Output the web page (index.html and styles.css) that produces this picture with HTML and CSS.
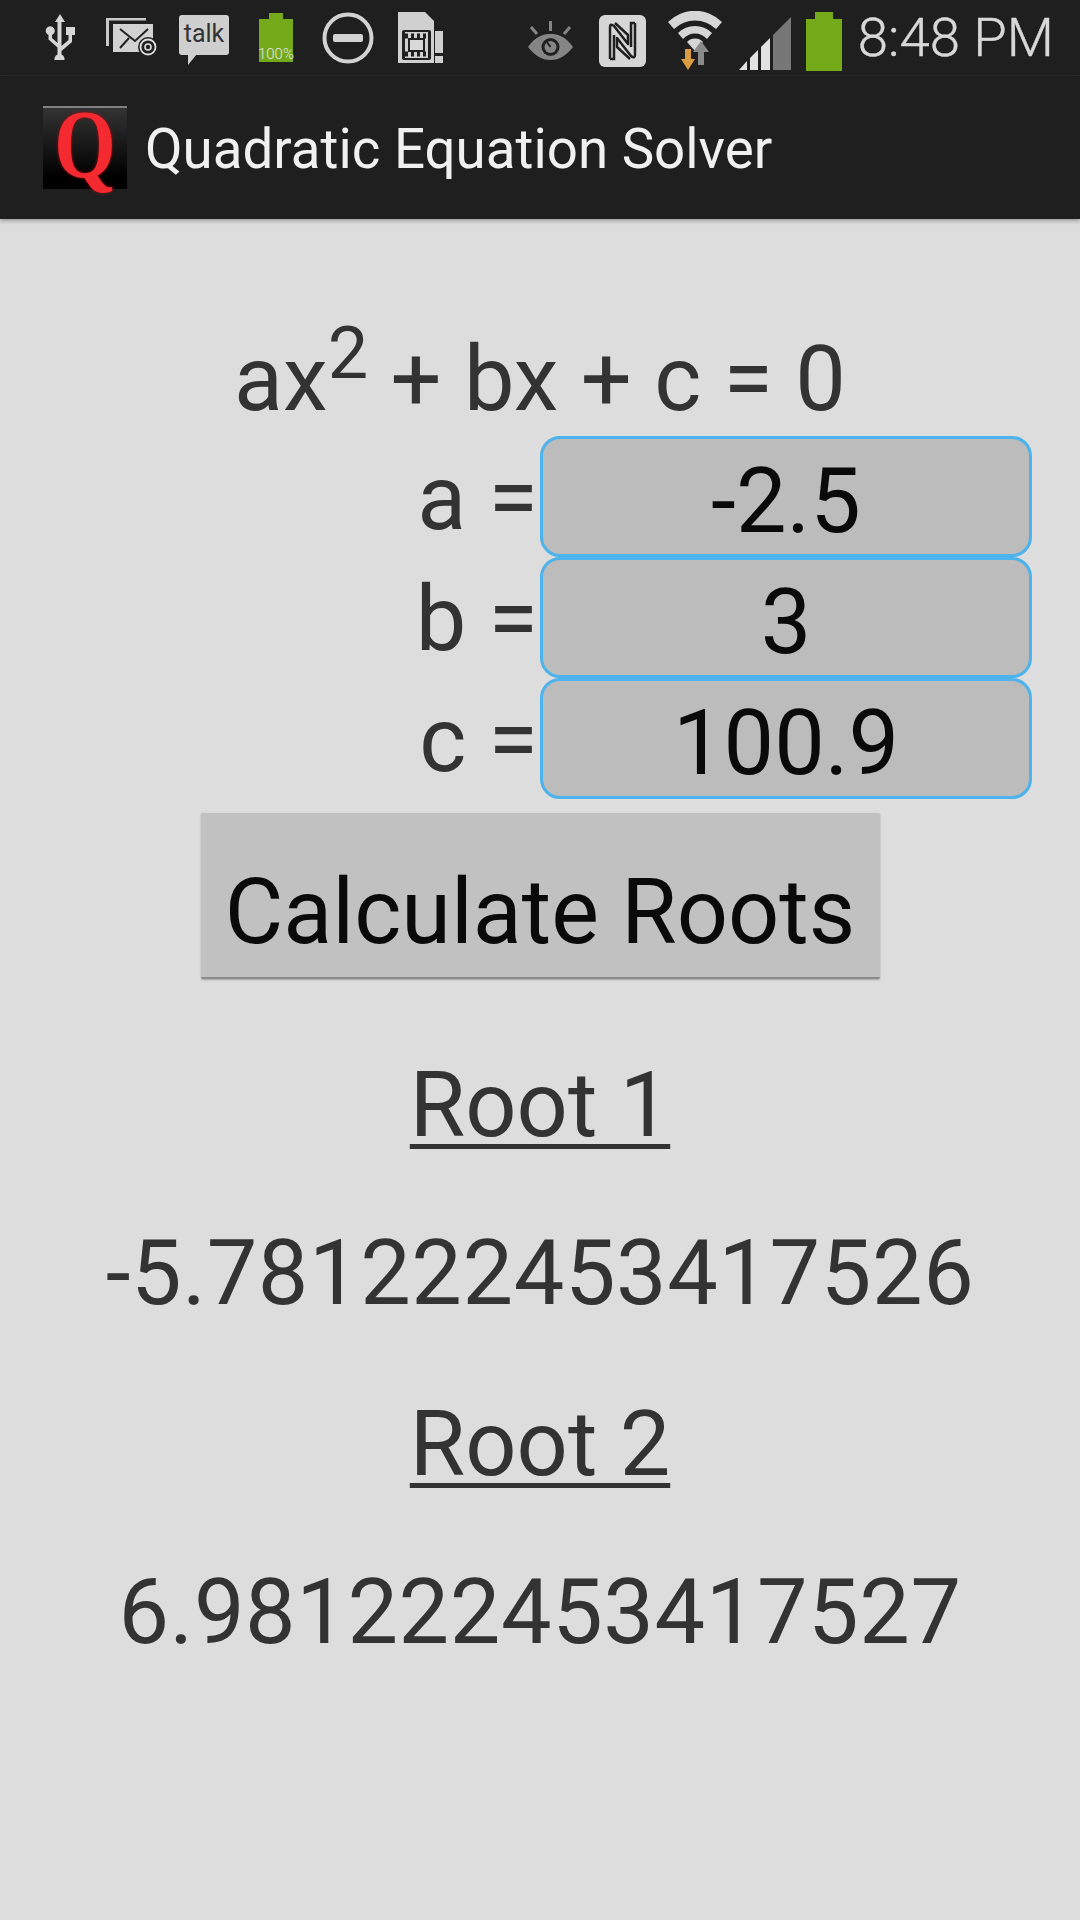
FILE: index.html
```html
<!DOCTYPE html>
<html lang="en">
<head>
<meta charset="utf-8">
<title>Quadratic Equation Solver</title>
<link rel="stylesheet" href="styles.css">
</head>
<body>
<header class="status">
  <div class="status-left">
    <svg class="i-usb" viewBox="0 0 30 46"><path d="M15 0l5 8h-3.500v24l7-6v-5h-2.500v-8h9v8h-3v7l-10.500 9v3.500a5 5 0 1 1-4 0v-7l-9-8v-4.500a4.500 4.500 0 1 1 3.500 0v3l5.500 5V8H10z" fill="#d6d6d6"/></svg>
    <svg class="i-mail" viewBox="0 0 52 38"><path d="M0 0h40v2.500H3V28H0z" fill="#c9c9c9"/><rect x="7" y="6" width="40" height="28" fill="#d2d2d2"/><path d="M14 11l15 12L42 11M14 30l9-10" fill="none" stroke="#222" stroke-width="2"/><circle cx="42" cy="29" r="10" fill="#202020"/><circle cx="42" cy="29" r="7.500" fill="none" stroke="#e0e0e0" stroke-width="1.800"/><circle cx="42" cy="29" r="3" fill="none" stroke="#e0e0e0" stroke-width="1.600"/></svg>
    <div class="talk"><span class="talk-text">talk</span><i class="talk-tail"></i></div>
    <div class="batt-full"><i class="batt-cap"></i><i class="batt-body"></i><span class="batt-pct">100%</span></div>
    <svg class="i-dnd" viewBox="0 0 52 52"><circle cx="26" cy="26" r="23.500" fill="none" stroke="#d2d2d2" stroke-width="4"/><rect x="11" y="22" width="30" height="8" rx="2" fill="#d2d2d2"/></svg>
    <svg class="i-sim" viewBox="0 0 45 51"><path d="M0 0h27l9 9v12H0z" fill="#d0d0d0"/><path d="M0 21h4v26h28v-26h4v30H0z" fill="#d0d0d0"/><rect x="4" y="18" width="29" height="30" rx="2" fill="#202020"/><rect x="7" y="20" width="23" height="26" fill="#cfcfcf"/><rect x="11" y="27" width="15" height="12" fill="#d8d8d8" stroke="#202020" stroke-width="2"/><path d="M7 24h23M7 42h23" stroke="#202020" stroke-width="5" stroke-dasharray="3 3"/><rect x="37" y="19" width="8" height="22" fill="#cfcfcf"/><rect x="37" y="44" width="8" height="7" fill="#cfcfcf"/></svg>
  </div>
  <div class="status-right">
    <svg class="i-eye" viewBox="0 0 45 39"><path d="M22.500 0v10M3 6l6 7M42 6l-6 7" stroke="#858585" stroke-width="3"/><path d="M0 26C8 15 15 13 22.500 13S37 15 45 26C37 36 30 39 22.500 39S8 36 0 26z" fill="#858585"/><circle cx="22.500" cy="26" r="9" fill="#202020"/><circle cx="22.500" cy="26" r="6" fill="#858585"/><path d="M22.500 26l-5-7" stroke="#202020" stroke-width="2"/></svg>
    <svg class="i-nfc" viewBox="0 0 47 52"><rect width="47" height="52" rx="6" fill="#d6d6d6"/><path d="M11 44V12q0-4 4-1l14 18v-9L16 8M36 8v32q0 4-4 1L18 23v9l13 12" fill="none" stroke="#202020" stroke-width="2.500" stroke-linejoin="round"/><path d="M11 44h4V20M36 8h-4v24" fill="none" stroke="#202020" stroke-width="2.500"/></svg>
    <svg class="i-wifi" viewBox="0 0 54 59"><path d="M0 11a38 38 0 0 1 54 0l-6 7a30 30 0 0 0-42 0z" fill="#d6d6d6"/><path d="M10 22a24 24 0 0 1 34 0l-5 6a16 16 0 0 0-24 0z" fill="#d6d6d6"/><path d="M19 31a11 11 0 0 1 16 0l-8 9z" fill="#d6d6d6"/><path d="M20 59L13 48h4V38h6v10h4z" fill="#dc9c42"/><path d="M33 30l8 11h-5v13h-6V41h-5z" fill="#8a8a8a"/></svg>
    <svg class="i-signal" viewBox="0 0 52 53"><path d="M34 53V18L52 0v53z" fill="#777"/><path d="M22 53V30l9-9v32z" fill="#e2e2e2"/><path d="M11 53V41l8-8v20z" fill="#e2e2e2"/><path d="M0 53l8-9v9z" fill="#e2e2e2"/></svg>
    <div class="batt-full batt-plain"><i class="batt-cap"></i><i class="batt-body"></i></div>
    <span class="clock">8:48 PM</span>
  </div>
</header>
<div class="actionbar">
  <div class="logo"><span class="logo-q">Q</span></div>
  <h1 class="app-title">Quadratic Equation Solver</h1>
</div>
<main class="content">
  <div class="equation">ax<sup class="sq">2</sup> + bx + c = 0</div>
  <div class="fields">
    <div class="row"><span class="label">a =</span><div class="field">-2.5</div></div>
    <div class="row"><span class="label">b =</span><div class="field">3</div></div>
    <div class="row"><span class="label">c =</span><div class="field">100.9</div></div>
  </div>
  <button class="calc" type="button">Calculate Roots</button>
  <div class="root-title root-first">Root 1</div>
  <div class="root-value">-5.781222453417526</div>
  <div class="root-title root-second">Root 2</div>
  <div class="root-value">6.981222453417527</div>
</main>
</body>
</html>
```
FILE: styles.css
```css
* { box-sizing: border-box; }
html, body { margin: 0; padding: 0; }
body {
  width: 1080px;
  height: 1920px;
  overflow: hidden;
  background: #dddddd;
  font-family: Roboto, "Liberation Sans", sans-serif;
  color: #333;
}
.status {
  height: 76px;
  background: #1f1f1f;
  border-bottom: 1px solid #2a2a2a;
  display: flex;
  justify-content: space-between;
  align-items: flex-start;
  padding-left: 45px;
  padding-right: 26px;
}
.status svg { display: block; flex: none; }
.status-left, .status-right { display: flex; align-items: flex-start; }
.i-usb { width: 30px; height: 46px; margin-top: 14px; }
.i-mail { width: 52px; height: 38px; margin-top: 18px; margin-left: 31px; }
.talk {
  position: relative;
  width: 50px; height: 40px;
  margin-top: 15px; margin-left: 21px;
  background: #cfcfcf;
  border-radius: 3px;
  text-align: center;
}
.talk-text { font-size: 25px; line-height: 38px; color: #333; display: block; }
.talk-tail {
  position: absolute; left: 9px; top: 39px;
  border-top: 11px solid #cfcfcf; border-right: 9px solid transparent;
}
.batt-full { position: relative; width: 34px; height: 49px; margin-top: 13px; margin-left: 30px; }
.batt-cap { display: block; width: 14px; height: 6px; margin: 0 auto; background: #74aa1a; }
.batt-body { display: block; height: 43px; background: #74aa1a; }
.batt-pct {
  position: absolute; left: -4px; right: -4px; bottom: 0;
  font-size: 15px; line-height: 16px; text-align: center; color: #e4e4e4; font-weight: 300;
}
.i-dnd { width: 52px; height: 52px; margin-top: 12px; margin-left: 29px; }
.i-sim { width: 45px; height: 51px; margin-top: 12px; margin-left: 24px; }
.i-eye { width: 45px; height: 39px; margin-top: 21px; }
.i-nfc { width: 47px; height: 52px; margin-top: 15px; margin-left: 26px; }
.i-wifi { width: 54px; height: 59px; margin-top: 11px; margin-left: 22px; }
.i-signal { width: 52px; height: 53px; margin-top: 17px; margin-left: 17px; }
.batt-plain { width: 36px; height: 59px; margin-top: 12px; margin-left: 15px; }
.batt-plain .batt-cap { width: 18px; height: 7px; }
.batt-plain .batt-body { height: 52px; }
.clock { font-size: 54.500px; line-height: 74px; font-weight: 300; -webkit-text-stroke: .4px #d8d8d8; color: #d8d8d8; margin-left: 16px; white-space: nowrap; }
.actionbar {
  height: 143px;
  background: #1f1f1f;
  display: flex;
  align-items: center;
  padding-left: 43px;
  box-shadow: 0 2px 4px rgba(0,0,0,.3);
  position: relative;
}
.logo {
  width: 84px; height: 83px;
  background: linear-gradient(#333, #000 85%);
  border-top: 2px solid #808080;
  display: flex; justify-content: center; align-items: center;
}
.logo-q {
  font-family: "Liberation Serif", serif;
  font-weight: 700;
  font-size: 79px;
  line-height: 64px;
  color: #f52a30;
  text-shadow: 0 0 3px #a01015;
  transform: scaleY(1.22) translateY(-3px);
}
.app-title { margin: 0 0 0 18px; padding-top: 3px; font-size: 54.700px; font-weight: 400; color: #f0f0f0; white-space: nowrap; }
.content { display: flex; flex-direction: column; align-items: center; }
.equation { font-size: 90px; line-height: 103px; margin-top: 109px; white-space: nowrap; }
.sq { font-size: 72px; line-height: 0; vertical-align: 32px; }
.fields { align-self: stretch; margin-top: 5px; }
.row { display: flex; justify-content: flex-end; align-items: center; padding-right: 48px; height: 121px; }
.label { font-size: 90px; padding-top: 4px; color: #333; margin-right: 2px; white-space: nowrap; }
.field {
  width: 492px; height: 121px;
  background: #bcbcbc;
  border: 3px solid #4db3ec;
  border-radius: 20px;
  font-size: 90px; line-height: 126px;
  text-align: center;
  color: #0a0a0a;
}
.calc {
  width: 679px; height: 166px;
  margin-top: 14px;
  border: 0;
  background: #c1c1c1;
  border-bottom: 2px solid #8c8c8c;
  border-radius: 2px;
  font-family: inherit;
  font-size: 90px;
  color: #0a0a0a;
  box-shadow: 0 1px 2px rgba(0,0,0,.25);
  padding: 34px 0 0;
  white-space: nowrap;
}
.root-title {
  font-size: 90px; line-height: 103px;
  text-decoration: underline;
  text-decoration-thickness: 5px;
  text-underline-offset: 8px;
  margin-top: 65px;
}
.root-first { margin-top: 75px; }
.root-second { margin-top: 68px; }
.root-value { font-size: 90px; line-height: 103px; letter-spacing: .6px; margin-top: 65px; white-space: nowrap; }
```
